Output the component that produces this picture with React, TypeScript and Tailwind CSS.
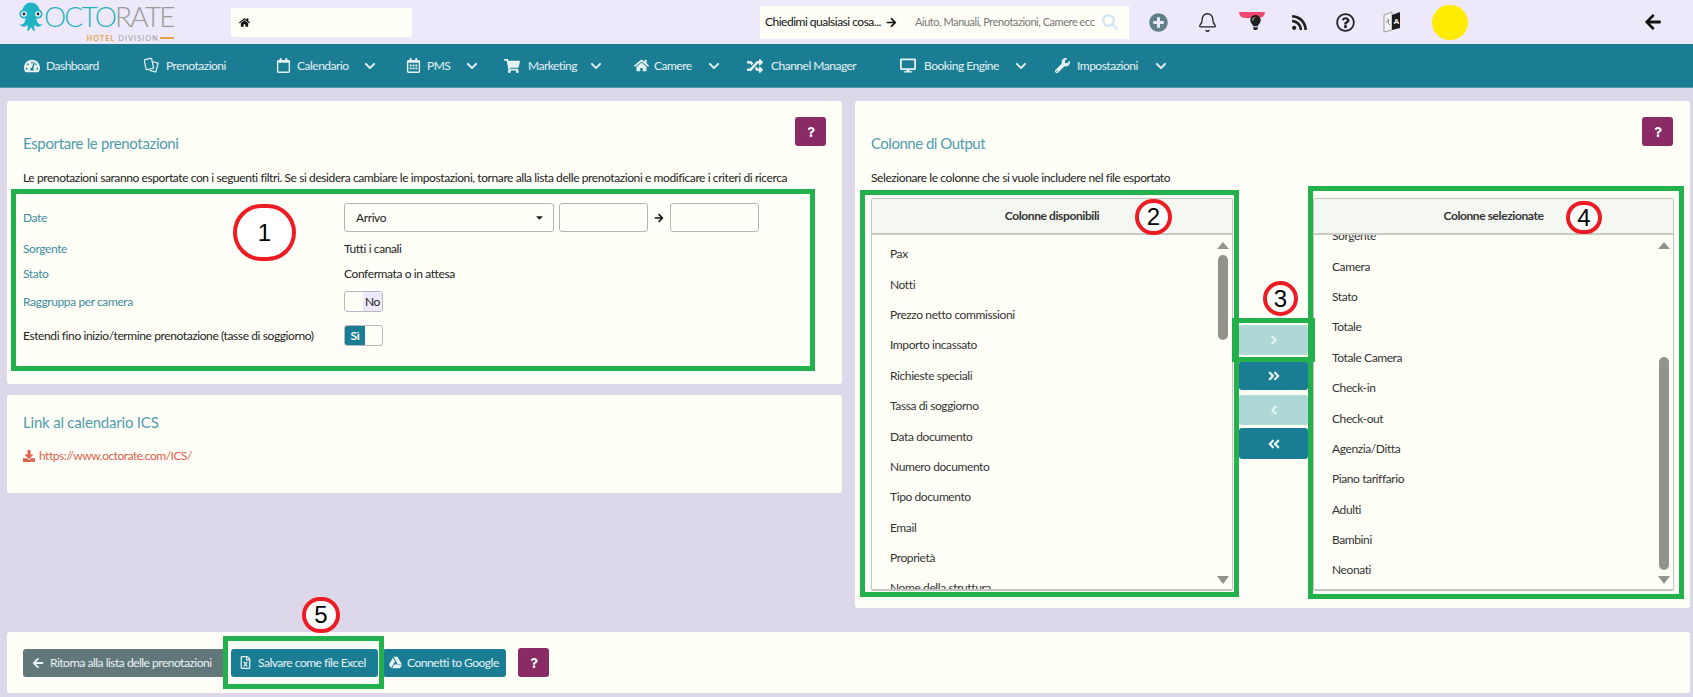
import React from "react";
import { Bell } from "lucide-react";
import {
  FaTachometerAlt, FaRegCalendar, FaRegCalendarAlt, FaShoppingCart, FaHome, FaRandom, FaDesktop, FaWrench,
  FaChevronDown, FaPlusCircle, FaRss, FaRegQuestionCircle, FaArrowLeft, FaArrowRight, FaSearch,
  FaDownload, FaRegFileExcel, FaGoogleDrive, FaAngleRight, FaAngleLeft, FaAngleDoubleRight, FaAngleDoubleLeft,
  FaQuestion, FaCaretDown, FaLightbulb,
} from "react-icons/fa";

const Cards = () => (
  <svg width="17" height="17" viewBox="0 0 17 17" fill="none" stroke="currentColor" strokeWidth="1.3">
    <rect x="1.2" y="1.5" width="8" height="11" rx="1" transform="rotate(-12 5 7)" />
    <path d="M9.5 4.5l5.5 1.5-2.5 9.5-6.5-1.8" />
  </svg>
);

const Octopus = () => (
  <svg width="24" height="30" viewBox="0 0 24 30" className="shrink-0">
    <circle cx="12" cy="9" r="8.5" fill="#1fb3c4" />
    <circle cx="5" cy="12" r="4.6" fill="#1fb3c4" />
    <circle cx="19" cy="12" r="4.6" fill="#1fb3c4" />
    <circle cx="5" cy="12" r="2.8" fill="#fff" />
    <circle cx="19" cy="12" r="2.8" fill="#fff" />
    <circle cx="5" cy="12" r="1.4" fill="#123" />
    <circle cx="19" cy="12" r="1.4" fill="#123" />
    <path d="M7 15h10l1 4c1 3 3 4 5 3-1 3-5 4-7 1l-1 2 1 4c-2 0-3-2-4-4-1 2-2 4-4 4l1-4-1-2c-2 3-6 2-7-1 2 1 4 0 5-3z" fill="#1fb3c4" />
  </svg>
);

const TranslateIcon = () => (
  <svg width="18" height="24" viewBox="0 0 18 24">
    <path d="M1 5l8-3v18l-8 2z" fill="#f4f4f4" stroke="#888" strokeWidth="0.8" />
    <path d="M9 5l8-3v16l-8 2z" fill="#1c1c1c" />
    <path d="M4 9l2 1-1 3 2 2M3 12l2-1" stroke="#666" strokeWidth="0.8" fill="none" />
    <text x="10.5" y="14" fontSize="8" fontWeight="700" fill="#fff" fontFamily="Liberation Sans, sans-serif">A</text>
  </svg>
);

const navItems = [
  { icon: <FaTachometerAlt size={16} />, label: "Dashboard", cls: "w-[120px]", gap: "ml-[6px]" },
  { icon: <Cards />, label: "Prenotazioni", cls: "w-[131px]", gap: "ml-[6px]" },
  { icon: <FaRegCalendar size={15} />, label: "Calendario", cls: "w-[130px]", chev: true, lw: "w-[52px]", gap: "ml-[6px]" },
  { icon: <FaRegCalendarAlt size={15} />, label: "PMS", cls: "w-[99px]", chev: true, lw: "w-[24px]", gap: "ml-[6px]" },
  { icon: <FaShoppingCart size={16} />, label: "Marketing", cls: "w-[129px]", chev: true, lw: "w-[47px]", gap: "ml-[8px]" },
  { icon: <FaHome size={15} />, label: "Camere", cls: "w-[114px]", chev: true, lw: "w-[39px]", gap: "ml-[5px]" },
  { icon: <FaRandom size={16} />, label: "Channel Manager", cls: "w-[153px]", gap: "ml-[8px]" },
  { icon: <FaDesktop size={17} />, label: "Booking Engine", cls: "w-[154px]", chev: true, lw: "w-[76px]", gap: "ml-[8px]" },
  { icon: <FaWrench size={15} />, label: "Impostazioni", cls: "w-[120px]", chev: true, lw: "w-[63px]", gap: "ml-[7px]" },
];

const Help = ({ className = "" }: { className?: string }) => (
  <button className={`flex h-[29px] w-[31px] items-center justify-center rounded-[3px] bg-[#8a2b66] text-white ${className}`}>
    <FaQuestion size={10} />
  </button>
);

const DualList = ({ title, items, inner, thumb, width }: { title: string; items: string[]; inner: string; thumb: string; width: string }) => (
  <div className={`flex h-[392px] flex-col rounded-[2px] border border-[#c4c6c0] shadow-[0_1px_1px_#bbb] ${width}`}>
    <div className="flex h-[36px] shrink-0 items-center justify-center border-b-2 border-[#c9cbc5] bg-[#f5f8f2] text-[12px] font-bold tracking-[-0.4px] text-[#333]">
      {title}
    </div>
    <div className="relative flex-1 overflow-hidden">
      <ul className={inner}>
        {items.map((t) => (
          <li key={t} className="flex h-[30.4px] items-center pl-[18px] text-[12px] tracking-[-0.4px] text-[#333] whitespace-nowrap">{t}</li>
        ))}
      </ul>
      <span className="absolute right-[3px] top-[7px] h-0 w-0 border-x-[6px] border-b-[7px] border-x-transparent border-b-[#92948a]" />
      <span className={`absolute right-[4px] w-[10px] rounded-[5px] bg-[#92948a] ${thumb}`} />
      <span className="absolute bottom-[5px] right-[3px] h-0 w-0 border-x-[6px] border-t-[8px] border-x-transparent border-t-[#92948a]" />
    </div>
  </div>
);

const ArrowBtn = ({ light, children, className }: { light?: boolean; children: React.ReactNode; className: string }) => (
  <button className={`flex w-[69px] items-center justify-center rounded-[3px] text-[14px] text-[#e8f4f4] ${light ? "bg-[#aed8d6]" : "bg-[#1a7d94]"} ${className}`}>
    {children}
  </button>
);

const Mark = ({ className }: { className: string }) => (
  <div className={`pointer-events-none absolute border-[5px] border-[#22b14c] ${className}`} />
);

const Circle = ({ n, className }: { n: string; className: string }) => (
  <div className={`pointer-events-none absolute flex items-center justify-center rounded-full border-[4px] border-[#ed1c24] bg-white font-['Liberation_Sans',sans-serif] text-[24px] leading-none text-black ${className}`}>
    {n}
  </div>
);

export default function App() {
  return (
    <div className="relative h-[697px] w-[1693px] overflow-hidden bg-[#dcd8e9] font-['Lato',sans-serif] text-[12px] text-[#222]">
      {/* top bar */}
      <header className="flex h-[44px] items-center bg-[#ede9fa]">
        <div className="ml-[19px] flex w-[212px] items-start">
          <Octopus />
          <div className="ml-[1px] flex flex-col">
            <div className="h-[29px] text-[28px] font-light leading-[29px] tracking-[-1.8px]">
              <span className="text-[#1fb3c4]">OCTO</span><span className="text-[#9a9a9a]">RATE</span>
            </div>
            <div className="mt-[3px] flex items-center justify-end text-[7px] font-bold leading-[8px] tracking-[1.2px]">
              <span className="text-[#e8a33d]">HOTEL</span><span className="ml-[3px] font-normal text-[#999]">DIVISION</span>
              <span className="ml-[1px] h-[2px] w-[14px] bg-[#e8a33d]" />
            </div>
          </div>
        </div>
        <div className="flex h-[29px] w-[181px] items-center rounded-[3px] bg-[#fffff8] pl-[8px] text-[11px] text-[#111]">
          <FaHome size={11} />
        </div>
        <div className="ml-[348px] flex h-[33px] w-[369px] items-center bg-[#fffff8] pl-[5px]">
          <span className="w-[118px] whitespace-nowrap text-[12px] tracking-[-0.5px] text-[#111]">Chiedimi qualsiasi cosa...</span>
          <FaArrowRight size={11} className="ml-[3px] text-[#111]" />
          <span className="ml-[18px] w-[181px] overflow-hidden whitespace-nowrap text-[11px] tracking-[-0.45px] text-[#777]">Aiuto, Manuali, Prenotazioni, Camere ecc</span>
          <FaSearch size={16} className="ml-[6px] text-[#d8e6f6]" />
        </div>
        <FaPlusCircle size={19} className="ml-[20px] text-[#5f7f8a]" />
        <Bell size={21} strokeWidth={1.5} className="ml-[29px] text-[#222]" />
        <div className="relative ml-[21px] h-[20px] w-[26px] overflow-visible">
          <span className="absolute left-0 top-0 h-[6px] w-[26px] rounded-b-[13px] bg-[#ef4a6d]" />
          <FaLightbulb size={15} className="absolute left-[9px] top-[3px] text-[#222]" />
        </div>
        <FaRss size={17} className="ml-[26px] text-[#222]" />
        <FaRegQuestionCircle size={19} className="ml-[28px] text-[#222]" />
        <div className="ml-[28px]"><TranslateIcon /></div>
        <div className="ml-[31px] h-[35px] w-[36px] rounded-full bg-[#ffec00]" />
        <FaArrowLeft size={18} className="ml-[176px] text-[#111]" />
      </header>

      {/* nav */}
      <nav className="flex h-[44px] items-center border-b border-[#5a9aa8] bg-[#1a7d94] pl-[24px] text-[12px] text-[#e6f1f3]">
        {navItems.map((n) => (
          <div key={n.label} className={`flex items-center ${n.cls}`}>
            <span className="flex w-[16px] shrink-0 justify-center">{n.icon}</span>
            <span className={`${n.gap} whitespace-nowrap tracking-[-0.5px] ${n.lw ?? ""}`}>{n.label}</span>
            {n.chev && <FaChevronDown size={12} className="ml-[15px] shrink-0" />}
          </div>
        ))}
      </nav>

      {/* main */}
      <main className="flex gap-[13px] pl-[7px] pt-[13px]">
        <div className="flex w-[835px] shrink-0 flex-col gap-[11px]">
          <section className="h-[283px] rounded-[3px] bg-[#fffff8] pl-[16px] pr-[16px] pt-[16px]">
            <div className="flex items-start justify-between">
              <h2 className="mt-[16px] text-[15px] leading-[20px] tracking-[-0.35px] text-[#4f9bab]">Esportare le prenotazioni</h2>
              <Help />
            </div>
            <p className="mt-[15px] h-[20px] whitespace-nowrap leading-[20px] tracking-[-0.41px] text-[#222]">
              Le prenotazioni saranno esportate con i seguenti filtri. Se si desidera cambiare le impostazioni, tornare alla lista delle prenotazioni e modificare i criteri di ricerca
            </p>
            <div className="mt-[15px] grid grid-cols-[321px_1fr] tracking-[-0.4px]">
              <div className="flex h-[29px] items-center text-[#3d8ba0]">Date</div>
              <div className="flex h-[29px] items-center">
                <div className="flex h-[29px] w-[210px] items-center justify-between rounded-[3px] border border-[#b5b5b0] pl-[11px] pr-[8px] text-[#222]">
                  Arrivo <FaCaretDown size={11} />
                </div>
                <div className="ml-[5px] h-[29px] w-[89px] rounded-[3px] border border-[#b5b5b0]" />
                <FaArrowRight size={10} className="mx-[6px] text-[#111]" />
                <div className="h-[29px] w-[89px] rounded-[3px] border border-[#b5b5b0]" />
              </div>
              <div className="mt-[8px] flex h-[17px] items-center text-[#3d8ba0]">Sorgente</div>
              <div className="mt-[8px] flex h-[17px] items-center">Tutti i canali</div>
              <div className="mt-[8px] flex h-[17px] items-center text-[#3d8ba0]">Stato</div>
              <div className="mt-[8px] flex h-[17px] items-center">Confermata o in attesa</div>
              <div className="mt-[9px] flex h-[21px] items-center text-[#3d8ba0]">Raggruppa per camera</div>
              <div className="mt-[9px] flex h-[21px] w-[39px] overflow-hidden rounded-[3px] border border-[#b8b8c0]">
                <span className="w-[18px]" />
                <span className="flex flex-1 items-center justify-center bg-[#ede9fa]">No</span>
              </div>
              <div className="mt-[13px] flex h-[21px] items-center">Estendi fino inizio/termine prenotazione (tasse di soggiorno)</div>
              <div className="mt-[13px] flex h-[21px] w-[39px] overflow-hidden rounded-[3px] border border-[#b8b8c0]">
                <span className="flex w-[20px] items-center justify-center bg-[#1a7d94] font-bold text-white">Sì</span>
              </div>
            </div>
          </section>
          <section className="h-[98px] rounded-[3px] bg-[#fffff8] pl-[16px] pt-[17px]">
            <h2 className="text-[15px] leading-[20px] tracking-[-0.2px] text-[#4f9bab]">Link al calendario ICS</h2>
            <div className="mt-[15px] flex items-center gap-[4px] text-[#e0604a]">
              <FaDownload size={12} />
              <span className="tracking-[-0.5px]">https://www.octorate.com/ICS/</span>
            </div>
          </section>
        </div>

        <section className="h-[507px] w-[835px] shrink-0 rounded-[3px] bg-[#fffff8] pl-[16px] pr-[16px] pt-[16px]">
          <div className="flex items-start justify-between">
            <h2 className="mt-[16px] text-[15px] leading-[20px] tracking-[-0.5px] text-[#4f9bab]">Colonne di Output</h2>
            <Help className="mr-[1px]" />
          </div>
          <p className="mt-[15px] h-[20px] whitespace-nowrap leading-[20px] tracking-[-0.41px]">Selezionare le colonne che si vuole includere nel file esportato</p>
          <div className="mt-[10px] flex items-start">
            <DualList
              title="Colonne disponibili"
              width="w-[362px]"
              inner="pt-[4px]"
              thumb="top-[20px] h-[85px]"
              items={["Pax", "Notti", "Prezzo netto commissioni", "Importo incassato", "Richieste speciali", "Tassa di soggiorno", "Data documento", "Numero documento", "Tipo documento", "Email", "Proprietà", "Nome della struttura"]}
            />
            <div className="ml-[6px] mr-[5px] flex w-[69px] flex-col pt-[127px]">
              <ArrowBtn light className="h-[30px]"><FaAngleRight /></ArrowBtn>
              <ArrowBtn className="mt-[6px] h-[29px]"><FaAngleDoubleRight /></ArrowBtn>
              <ArrowBtn light className="mt-[5px] h-[30px]"><FaAngleLeft /></ArrowBtn>
              <ArrowBtn className="mt-[3px] h-[31px]"><FaAngleDoubleLeft /></ArrowBtn>
            </div>
            <DualList
              title="Colonne selezionate"
              width="w-[361px]"
              inner="-mt-[14px]"
              thumb="top-[122px] h-[213px]"
              items={["Sorgente", "Camera", "Stato", "Totale", "Totale Camera", "Check-in", "Check-out", "Agenzia/Ditta", "Piano tariffario", "Adulti", "Bambini", "Neonati"]}
            />
          </div>
        </section>
      </main>

      {/* footer */}
      <footer className="absolute bottom-[4px] left-[7px] right-[3px] flex h-[61px] items-center rounded-[3px] bg-[#fffff8] pl-[16px] text-[12px] tracking-[-0.5px] text-[#e9f3f4]">
        <button className="flex h-[28px] w-[203px] items-center gap-[6px] rounded-[3px] bg-[#62777a] pl-[9px]"><FaArrowLeft size={12} />Ritorna alla lista delle prenotazioni</button>
        <button className="ml-[5px] flex h-[28px] w-[147px] items-center gap-[6px] rounded-[3px] bg-[#1a7d94] pl-[8px]"><FaRegFileExcel size={13} />Salvare come file Excel</button>
        <button className="ml-[5px] flex h-[28px] w-[123px] items-center gap-[5px] rounded-[3px] bg-[#1a7d94] pl-[6px]"><FaGoogleDrive size={13} />Connetti to Google</button>
        <Help className="ml-[12px]" />
      </footer>

      {/* annotations */}
      <Mark className="left-[11px] top-[189px] h-[182px] w-[804px]" />
      <Mark className="left-[860px] top-[190px] h-[407px] w-[379px]" />
      <Mark className="left-[1232px] top-[318px] h-[44px] w-[83px]" />
      <Mark className="left-[1308px] top-[186px] h-[413px] w-[376px]" />
      <Mark className="left-[223px] top-[636px] h-[53px] w-[161px]" />
      <Circle n="1" className="left-[233px] top-[204px] h-[57px] w-[63px]" />
      <Circle n="2" className="left-[1135px] top-[199px] h-[36px] w-[37px]" />
      <Circle n="3" className="left-[1263px] top-[281px] h-[35px] w-[35px]" />
      <Circle n="4" className="left-[1566px] top-[201px] h-[33px] w-[36px]" />
      <Circle n="5" className="left-[302px] top-[597px] h-[36px] w-[38px]" />
    </div>
  );
}
